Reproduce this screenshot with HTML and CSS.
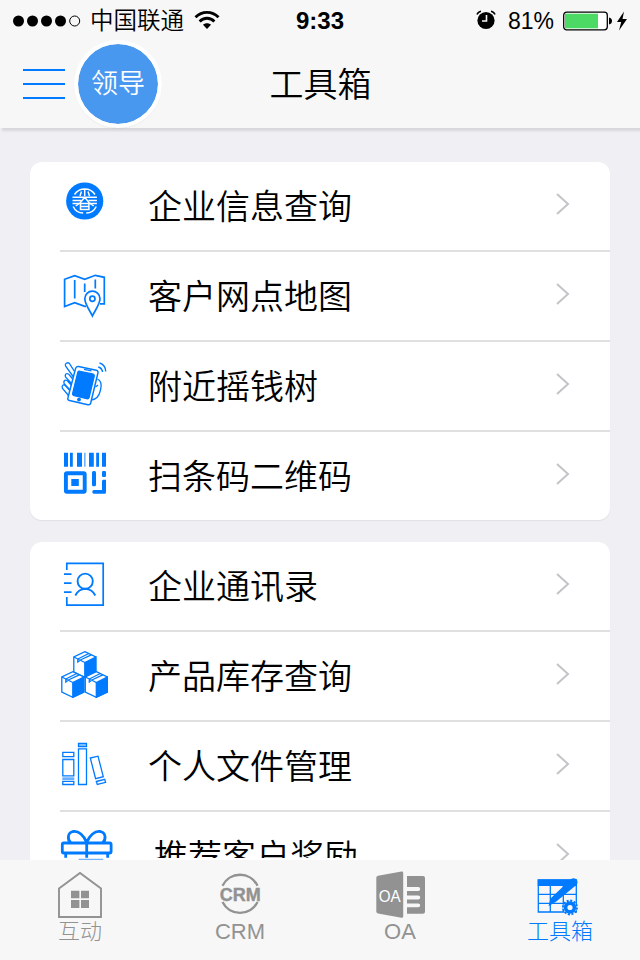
FILE: index.html
```html
<!DOCTYPE html>
<html lang="zh-CN">
<head>
    <meta charset="UTF-8">
    <meta name="viewport" content="width=device-width, initial-scale=1.0">
    <title>工具箱</title>
    <link rel="stylesheet" href="styles.css">
</head>
<body>

    <header class="header">
        <div class="status-bar">
            <div class="status-left">
                <svg class="signal" width="68" height="12" viewBox="0 0 68 12">
                    <circle cx="5.5" cy="6" r="5.5"/>
                    <circle cx="19.5" cy="6" r="5.5"/>
                    <circle cx="33.5" cy="6" r="5.5"/>
                    <circle cx="47.5" cy="6" r="5.5"/>
                    <circle cx="61.7" cy="6" r="5" fill="none" stroke="#000"/>
                </svg>
                <span class="carrier">中国联通</span>
                <svg class="wifi" width="26" height="20" viewBox="0 0 26 20" fill="none" stroke="#000" stroke-width="2.8">
                    <path d="M1.5 7.3C8 .6 18 .6 24.5 7.3"/>
                    <path d="M5.6 11.4c4.2-4.2 10.6-4.2 14.8 0"/>
                    <path d="M13 19l-4-4.2c2.3-2 5.7-2 8 0z" fill="#000" stroke="none"/>
                </svg>
            </div>
            <div class="time">9:33</div>
            <div class="status-right">
                <svg class="alarm" width="20" height="20" viewBox="0 0 20 20">
                    <circle cx="10" cy="10.5" r="8.6"/>
                    <path d="M1 4.500C1.800 2.500 3 1.500 5 1.200M19 4.500C18.200 2.500 17 1.500 15 1.200" fill="none" stroke="#000" stroke-width="1.5"/>
                    <path d="M10.500 5v6H6" fill="none" stroke="#f7f7f7" stroke-width="1.6"/>
                </svg>
                <span class="percent">81%</span>
                <svg class="battery" width="66" height="20" viewBox="0 0 66 20">
                    <rect x=".7" y="1.2" width="43.6" height="17.6" rx="3" fill="#fff" stroke="#000" stroke-width="1.3"/>
                    <rect x="2" y="2.7" width="33" height="14.6" fill="#4cd964"/>
                    <path d="M46 6.500c4 .5 4 6.500 0 7z"/>
                    <path d="M61 .5l-7 10.500h4.200L56 19.500 64 8h-4.500z"/>
                </svg>
            </div>
        </div>
        <div class="nav-bar">
            <div class="menu"><i></i><i></i><i></i></div>
            <div class="avatar">领导</div>
            <h1>工具箱</h1>
        </div>
    </header>

    <main class="content">
        <ul class="card">
            <li class="row">
                <svg class="icon" viewBox="0 0 56 60">
                    <circle cx="24.7" cy="29" r="18.6" fill="#007aff"/>
                    <g fill="none" stroke="#fff" stroke-width="1.5">
                        <path d="M14.500 22.500A12.300 12.300 0 0 1 35 22.500M24.700 17v7M21.500 19.500l-1.500 4.500M28 19.500l1.500 4.500M12.500 25.300h24.400M12.500 28.500h8.500M28.500 28.500h8.400M12.500 31.600h7M30 31.600h6.900"/>
                        <path d="M24.700 25.300l-4.500 5.500-4.500 3.200M24.700 25.300l4.500 5.500 4.500 3.200M20 31.600h9.500M20 34.600h9.500M20.500 31.600v6h8.400v-6M13.200 34.500c1.800 4 5 6.400 10 6.600M36.200 34.500c-1.800 4-5 6.400-10 6.600"/>
                    </g>
                </svg>
                <span class="label">企业信息查询</span>
                <svg class="arrow" viewBox="0 0 14 22"><path d="M1 1l11 10L1 21"/></svg>
            </li>
            <li class="row">
                <svg class="icon line" viewBox="0 0 56 60">
                    <path d="M26 44.300l-1.300.1-10-3.700-10.100 3.900V17.300l10.100-3.600 10 3.600 10.600-4 9 2V41.900H40"/>
                    <path d="M14.700 18v18.500M24.700 21.500v8.500M35.300 17.500v9"/>
                    <path d="M32.400 54c-2-4.500-7.600-12-7.600-17.300a7.600 7.600 0 0 1 15.200 0C40 42 34.400 49.500 32.400 54z" fill="#fff"/>
                    <circle cx="32.4" cy="36.7" r="2.6"/>
                </svg>
                <span class="label">客户网点地图</span>
                <svg class="arrow" viewBox="0 0 14 22"><path d="M1 1l11 10L1 21"/></svg>
            </li>
            <li class="row">
                <svg class="icon thin" viewBox="0 0 56 60">
                    <path d="M13.500 25L5.800 14.500c-1.800-3.500 2.600-5 4.200-2.200l4.500 7.200"/>
                    <path d="M12 32L5.500 25c-1-3.500 2-4.500 4-2l4 5M10.500 38.500l-6.300-6.800c-1.200-3.200 1.500-4.800 3.800-2.200l4.500 5M8.500 43.500l-6-7c-1.200-3 .8-5 3.200-2.500l5 5.500"/>
                    <path d="M37.500 27c3 1.500 4.500 5.500 3 11-1 5-4 9.500-9.500 10"/>
                    <path d="M38 33l-2.500 2"/>
                    <path d="M18.500 14.500l17.800 3.800c1.500.4 2 1.300 1.600 2.800L30.700 51c-.4 1.500-1.300 2-2.800 1.700L9.500 48.600c-1.500-.4-2-1.300-1.600-2.700l7.700-29.500c.4-1.500 1.400-2.200 2.900-1.900z" fill="#fff" stroke-width="1.5"/>
                    <path d="M20 19.300l12.500 2.600c1.600.4 2 1.200 1.700 2.500l-5 20.800c-.4 1.300-1 1.800-2.500 1.500l-12.500-3c-1.400-.4-1.800-1.200-1.500-2.500l5-20.500c.3-1.300 1-1.700 2.300-1.400z" fill="#007aff"/>
                    <path d="M24 17.300l7.500 1.600"/>
                    <circle cx="19" cy="47.6" r="1.3" fill="#007aff"/>
                    <path d="M38.300 15c2.500.8 4 2.700 4.300 5M39.500 11c3.800 1 6 4 6.200 8.500" stroke-width="1.4"/>
                </svg>
                <span class="label">附近摇钱树</span>
                <svg class="arrow" viewBox="0 0 14 22"><path d="M1 1l11 10L1 21"/></svg>
            </li>
            <li class="row">
                <svg class="icon" viewBox="0 0 56 60" fill="#007aff">
                    <path d="M4 10.700h4v14H4zM10 10.700h2.800v14H10zM17 10.700h5v14h-5zM29 10.700h4.800v14H29zM36.200 10.700H39v14h-2.800zM42 10.700h4v14h-4z"/>
                    <path d="M24.200 10.700h1.300v14h-1.300z" opacity=".7"/>
                    <rect x="5.9" y="31.2" width="18.8" height="18.5" rx="1" fill="none" stroke="#007aff" stroke-width="3.9"/>
                    <path d="M11.300 37h7.500v7h-7.500z"/>
                    <rect x="32" y="29" width="4" height="15.2" rx="1.5"/>
                    <rect x="42" y="29" width="4" height="6" rx="1.3"/>
                    <path d="M43.200 37.700H46v12.500q0 1.500-1.500 1.500H33.800q-1.500 0-1.500-1.800t1.500-2H42v-8.700q0-1.500 1.200-1.500z"/>
                </svg>
                <span class="label">扫条码二维码</span>
                <svg class="arrow" viewBox="0 0 14 22"><path d="M1 1l11 10L1 21"/></svg>
            </li>
        </ul>

        <ul class="card">
            <li class="row">
                <svg class="icon line" viewBox="0 0 56 60">
                    <path d="M6.800 18v-6.700h36.400v41.900H6.800V45M4 22.100h7.500M4 31.100h7.500M4 40.100h7.500"/>
                    <circle cx="25.2" cy="29.2" r="7.6" stroke-width="1.9"/>
                    <path d="M15.300 43.500c4.500-8.800 15.500-8.800 20 0" stroke-width="1.9"/>
                </svg>
                <span class="label">企业通讯录</span>
                <svg class="arrow" viewBox="0 0 14 22"><path d="M1 1l11 10L1 21"/></svg>
            </li>
            <li class="row">
                <svg class="icon thin" viewBox="0 0 56 60">
                    <defs>
                        <g id="box">
                            <path d="M11 .7l11 5.300v15L11 26.300 0 21V6z" fill="#fff"/>
                            <path d="M11 11.500L22 6v15l-11 5.300z" fill="#007aff"/>
                            <path d="M0 6l11 5.500M4 8l11-5.500M6.500 9l11-5.200M4 8v3l1.800-1.200"/>
                        </g>
                    </defs>
                    <use href="#box" x="13.8" y="9"/>
                    <use href="#box" x="1.8" y="29"/>
                    <use href="#box" x="25.3" y="29"/>
                </svg>
                <span class="label">产品库存查询</span>
                <svg class="arrow" viewBox="0 0 14 22"><path d="M1 1l11 10L1 21"/></svg>
            </li>
            <li class="row">
                <svg class="icon thin" viewBox="0 0 56 60">
                    <path d="M2.800 20.300h11v4.300h-11zM2.800 27.500h11v16.300h-11zM2.800 49.300h11v3.200h-11zM18.500 11.500h8v3h-8zM18.500 16.800h8v35.700h-8z"/>
                    <path d="M2.300 45.300h12v2.700h-12z" fill="#007aff" opacity=".6" stroke="none"/>
                    <path d="M18.500 11.500h8v3h-8z" fill="#007aff" fill-opacity=".35" stroke="none"/>
                    <path d="M30.300 26l7.700-1.800 5.300 20.500-7.700 2zM36.300 49.500l8.400-2.200.9 3-8.300 2.100z"/>
                </svg>
                <span class="label">个人文件管理</span>
                <svg class="arrow" viewBox="0 0 14 22"><path d="M1 1l11 10L1 21"/></svg>
            </li>
            <li class="row row-last">
                <svg class="icon gift" viewBox="0 0 56 60">
                    <rect x="2.3" y="21" width="48.8" height="10" rx="1.5"/>
                    <path d="M5.700 31v4.800M47.700 31v4.800M26.700 21v14.800"/>
                    <path d="M26.700 20.500C24 13.500 18.500 8.500 13 9.500c-5.500 1.200-6 8-2.200 11.500M26.700 20.500c2.700-7 8.200-12 13.700-11 5.500 1.200 6 8 2.200 11.500"/>
                    <path d="M18.700 37.300h24.600" stroke-width="1" opacity=".7"/>
                </svg>
                <span class="label">推荐客户奖励</span>
                <svg class="arrow" viewBox="0 0 14 22"><path d="M1 1l11 10L1 21"/></svg>
            </li>
        </ul>
    </main>

    <nav class="tab-bar">
        <div class="tab">
            <svg viewBox="0 0 60 50">
                <path d="M9 18.500L30 3l21 15.500V47H9z" fill="none" stroke="#929292" stroke-width="1.9"/>
                <path d="M21 20.700h8.400v7.600H21zM31 20.700h8v7.600h-8zM21 30h8.400v8H21zM31 30h8v8h-8z"/>
            </svg>
            <span>互动</span>
        </div>
        <div class="tab">
            <svg viewBox="0 0 60 50">
                <path d="M12.500 15.700a19.500 19.500 0 0 1 35 0M12.500 32a19.500 19.500 0 0 0 35 0" fill="none" stroke="#929292" stroke-width="2.4"/>
                <text x="9.7" y="30.7" font-size="18.5" font-weight="bold" textLength="41" lengthAdjust="spacingAndGlyphs" stroke="#929292" stroke-width=".4">CRM</text>
            </svg>
            <span>CRM</span>
        </div>
        <div class="tab">
            <svg viewBox="0 0 60 50">
                <path d="M8 5.700l23.500-4.100q1.700-.2 1.700 1.400v43.500q0 1.600-1.700 1.300L8 43.600q-1.700-.3-1.700-2V7.600q0-1.600 1.700-1.900z"/>
                <path d="M37 6h16q2 0 2 2v33.700q0 2-2 2H37v-6.500h11.200q2 0 2-1.800t-2-1.800H37v-4.200h11.200q2 0 2-2t-2-2H37v-4.400h11.200q2 0 2-2t-2-2H37z"/>
                <text x="8.7" y="31.5" font-size="16" fill="#fff" textLength="22" lengthAdjust="spacingAndGlyphs">OA</text>
            </svg>
            <span>OA</span>
        </div>
        <div class="tab active">
            <svg viewBox="0 0 60 50">
                <path d="M8.300 10h38v32h-38zM8.300 24.300h38M8.300 33.300h38M20.300 10v32M33.300 10v32" fill="none" stroke="#007aff" stroke-width="1.3"/>
                <path d="M7.700 9.400h39V16h-39z"/>
                <path d="M41 9q3-1.800 5.200.3t.8 5.200L26 31.700l-7.500 4.500 2-7.700z"/>
                <circle cx="40" cy="37.5" r="6.9" fill="#f7f7f7" stroke="#007aff" stroke-width="2" stroke-dasharray="2.1 1.51"/>
                <circle cx="40" cy="37.5" r="4.4" fill="#f7f7f7" stroke="#007aff" stroke-width="3.6"/>
            </svg>
            <span>工具箱</span>
        </div>
    </nav>

</body>
</html>
```

FILE: styles.css
```css
* {
    box-sizing: border-box;
}

body {
    display: flex;
    flex-direction: column;
    height: 960px;
    margin: 0;
    overflow: hidden;
    background-color: #efeff4;
    color: #000;
    font-family: "Liberation Sans", "Noto Sans CJK SC", sans-serif;
    font-weight: 350;
}

svg {
    display: block;
    flex: none;
}

.header {
    flex: none;
    height: 128px;
    background-color: #f7f7f7;
    box-shadow: 2px 3px 2px #d8d8dc;
}

.status-bar {
    display: grid;
    grid-template-columns: 1fr auto 1fr;
    align-items: center;
    height: 40px;
    padding: 0 11px 0 13px;
    line-height: 40px;
}

.status-left,
.status-right {
    display: flex;
    align-items: center;
}

.status-right {
    justify-content: flex-end;
}

.carrier {
    margin: 1px 10px 0 9px;
    font-size: 23.5px;
}

.wifi {
    margin-top: -2px;
}

.alarm {
    margin-top: -2px;
}

.time {
    margin-left: -2px;
    font-size: 24px;
    font-weight: bold;
}

.percent {
    margin: 1px 9px 0 12px;
    font-size: 23px;
}

.nav-bar {
    display: grid;
    grid-template-columns: 42px 86px 1fr 160px;
    grid-template-rows: 88px;
    align-items: center;
    column-gap: 10px;
    padding-left: 23px;
}

.menu {
    display: flex;
    flex-direction: column;
    gap: 11.5px;
}

.menu i {
    height: 2.5px;
    background-color: #007aff;
}

.avatar {
    width: 86px;
    height: 86px;
    border: 3px solid #fff;
    border-radius: 50%;
    background-color: #4898f0;
    background-clip: padding-box;
    box-shadow: 0 0 0 1px #fff, 0 1px 2px rgba(0, 0, 0, 0.12);
    color: #fff;
    font-size: 27px;
    line-height: 80px;
    text-align: center;
}

h1 {
    height: 88px;
    margin: 0;
    font-size: 34px;
    font-weight: 350;
    line-height: 90px;
    text-align: center;
}

.content {
    flex: 1;
    min-height: 0;
    overflow: hidden;
    padding: 34px 30px 0;
}

.card {
    margin: 0 0 22px;
    padding: 0 0 0 30px;
    list-style: none;
    border-radius: 12px;
    background-color: #fff;
    box-shadow: 0 1px 1px #e0e0e4;
}

.row {
    display: flex;
    align-items: flex-start;
    height: 90px;
    border-bottom: 2px solid #e0e0e0;
}

.row:last-child {
    height: 88px;
    border-bottom: 0;
}

.icon {
    width: 56px;
    height: 60px;
    margin-top: 10px;
}

.line {
    fill: none;
    stroke: #007aff;
    stroke-width: 1.7;
}

.thin {
    fill: none;
    stroke: #007aff;
    stroke-width: 1.3;
}

.gift {
    fill: none;
    stroke: #007aff;
    stroke-width: 2.8;
}

.label {
    flex: 1;
    margin-left: 32px;
    font-size: 34px;
    line-height: 90px;
}

/* label is cut off just above the tab bar */
.row-last .label {
    height: 46px;
    margin-left: 38px;
    overflow: hidden;
}

.arrow {
    width: 14px;
    height: 22px;
    margin: 31px 40px 0 0;
    fill: none;
    stroke: #c4c4c8;
    stroke-width: 2;
}

.tab-bar {
    display: grid;
    grid-template-columns: repeat(4, 1fr);
    flex: none;
    height: 100px;
    background-color: #f7f7f7;
    color: #929292;
}

.tab {
    display: flex;
    flex-direction: column;
    align-items: center;
    padding-top: 10px;
    font-size: 22px;
    font-weight: 300;
    line-height: 24px;
}

.tab svg {
    width: 60px;
    height: 50px;
    fill: currentColor;
}

.active {
    color: #007aff;
}
```
